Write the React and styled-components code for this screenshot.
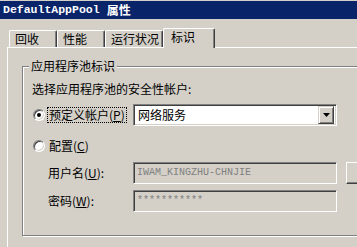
import React from 'react';
import styled, { createGlobalStyle } from 'styled-components';

const GlobalStyle = createGlobalStyle`
  html, body {
    margin: 0;
    padding: 0;
    background: #d4d0c8;
    overflow: hidden;
  }
`;

const tabs = [
  { label: '回收', width: 48 },
  { label: '性能', width: 48 },
  { label: '运行状况', width: 58 },
  { label: '标识', width: 52, active: true },
];

const Underline = ({ children }) => <Accel>{children}</Accel>;

const App = () => {
  return (
    <Window>
      <GlobalStyle />
      <TitleBar>
        <TitleLatin>DefaultAppPool</TitleLatin>
        <TitleCjk>属性</TitleCjk>
      </TitleBar>
      <Content>
        <TabStrip>
          {tabs.map(t => (
            <Tab key={t.label} $w={t.width} $active={t.active}>
              {t.label}
            </Tab>
          ))}
        </TabStrip>
        <Panel>
          <GroupBox>
            <Legend>应用程序池标识</Legend>
            <Instruction>选择应用程序池的安全性帐户:</Instruction>

            <Row $top={8}>
              <LabelCell>
                <Radio $checked />
                <FocusLabel>
                  预定义帐户(<Underline>P</Underline>)
                </FocusLabel>
              </LabelCell>
              <Combo>
                <ComboText>网络服务</ComboText>
                <DropButton>
                  <svg width="7" height="4" viewBox="0 0 7 4">
                    <path d="M0 0h7L3.5 4z" fill="#000" />
                  </svg>
                </DropButton>
              </Combo>
            </Row>

            <Row $top={9}>
              <LabelCell>
                <Radio />
                <PlainLabel>
                  配置(<Underline>C</Underline>)
                </PlainLabel>
              </LabelCell>
            </Row>

            <Row $top={5}>
              <FieldLabel>
                用户名(<Underline>U</Underline>):
              </FieldLabel>
              <DisabledField>IWAM_KINGZHU-CHNJIE</DisabledField>
              <PushButton />
            </Row>

            <Row $top={6}>
              <FieldLabel>
                密码(<Underline>W</Underline>):
              </FieldLabel>
              <DisabledField>***********</DisabledField>
            </Row>
          </GroupBox>
        </Panel>
      </Content>
    </Window>
  );
};

const Window = styled.div`
  width: 357px;
  height: 247px;
  overflow: hidden;
  display: flex;
  flex-direction: column;
  background: #d4d0c8;
  color: #000;
  font-family: "Noto Sans CJK SC", "Liberation Sans", sans-serif;
  font-size: 12px;
  line-height: 14px;
`;

const TitleBar = styled.div`
  flex-shrink: 0;
  height: 18px;
  margin-top: 1px;
  padding-left: 3px;
  display: flex;
  align-items: center;
  background: #0a246a;
  color: #ffffff;
  font-weight: bold;
  white-space: nowrap;
`;

const TitleLatin = styled.span`
  font-family: "Liberation Mono", monospace;
  font-size: 11.5px;
`;

const TitleCjk = styled.span`
  margin-left: 7px;
  font-size: 12px;
`;

const Content = styled.div`
  flex: 1;
  display: flex;
  flex-direction: column;
  padding: 8px 0 0 7px;
`;

const TabStrip = styled.div`
  display: flex;
  align-items: flex-end;
  height: 20px;
  padding-left: 2px;
  position: relative;
  z-index: 1;
`;

const Tab = styled.div`
  box-sizing: border-box;
  width: ${p => p.$w}px;
  height: ${p => (p.$active ? 20 : 17)}px;
  margin-bottom: ${p => (p.$active ? -1 : 0)}px;
  padding: 1px 0 0 ${p => (p.$active ? 7 : 5)}px;
  border-top: 1px solid #ffffff;
  border-left: 1px solid #ffffff;
  border-right: 1px solid #404040;
  border-radius: 2px 2px 0 0;
  box-shadow: inset -1px 0 0 #808080;
  background: #d4d0c8;
  white-space: nowrap;
  position: relative;
  z-index: ${p => (p.$active ? 2 : 1)};
`;

const Panel = styled.div`
  flex: 1;
  width: 400px;
  padding: 18px 0 0 14px;
  border-top: 1px solid #ffffff;
  border-left: 1px solid #ffffff;
`;

const GroupBox = styled.div`
  position: relative;
  box-sizing: border-box;
  width: 372px;
  height: 170px;
  padding: 15px 0 0 9px;
  border: 1px solid #808080;
  box-shadow: inset 1px 1px 0 #ffffff, 1px 1px 0 #ffffff;
  display: flex;
  flex-direction: column;
`;

const Legend = styled.div`
  position: absolute;
  top: -8px;
  left: 6px;
  padding: 0 2px;
  background: #d4d0c8;
`;

const Instruction = styled.div`
  height: 14px;
  white-space: nowrap;
`;

const Row = styled.div`
  display: flex;
  align-items: center;
  height: 22px;
  margin-top: ${p => p.$top}px;
`;

const LabelCell = styled.div`
  display: flex;
  align-items: center;
  width: 101px;
  padding-left: 1px;
  box-sizing: border-box;
  flex-shrink: 0;
`;

const Radio = styled.span`
  position: relative;
  box-sizing: border-box;
  width: 12px;
  height: 12px;
  flex-shrink: 0;
  border-radius: 50%;
  border: 1px solid;
  border-color: #808080 #ffffff #ffffff #808080;
  box-shadow: inset 1px 1px 0 #404040, inset -1px -1px 0 #d4d0c8;
  background: #ffffff;

  &::after {
    content: '';
    display: ${p => (p.$checked ? 'block' : 'none')};
    position: absolute;
    left: 3px;
    top: 3px;
    width: 4px;
    height: 4px;
    border-radius: 50%;
    background: #000000;
  }
`;

const FocusLabel = styled.span`
  margin-left: 2px;
  padding: 0 1px;
  border: 1px dotted #000000;
  white-space: nowrap;
`;

const PlainLabel = styled.span`
  margin-left: 4px;
  white-space: nowrap;
`;

const FieldLabel = styled.div`
  width: 101px;
  padding-left: 16px;
  box-sizing: border-box;
  flex-shrink: 0;
  white-space: nowrap;
`;

const Accel = styled.u`
  text-underline-offset: 1px;
`;

const Sunken = styled.div`
  box-sizing: border-box;
  width: 204px;
  height: 22px;
  flex-shrink: 0;
  border: 1px solid;
  border-color: #808080 #ffffff #ffffff #808080;
  box-shadow: inset 1px 1px 0 #404040, inset -1px -1px 0 #d4d0c8;
  display: flex;
  align-items: center;
`;

const Combo = styled(Sunken)`
  background: #ffffff;
  padding: 2px 2px 2px 4px;
  justify-content: space-between;
`;

const ComboText = styled.span`
  white-space: nowrap;
`;

const DropButton = styled.div`
  box-sizing: border-box;
  width: 16px;
  height: 18px;
  display: flex;
  align-items: center;
  justify-content: center;
  background: #d4d0c8;
  border: 1px solid;
  border-color: #d4d0c8 #404040 #404040 #d4d0c8;
  box-shadow: inset 1px 1px 0 #ffffff, inset -1px -1px 0 #808080;
`;

const DisabledField = styled(Sunken)`
  background: #d4d0c8;
  padding-left: 3px;
  color: #808080;
  font-family: "Liberation Mono", monospace;
  font-size: 10px;
  white-space: nowrap;
`;

const PushButton = styled.div`
  box-sizing: border-box;
  width: 80px;
  height: 22px;
  margin-left: 9px;
  flex-shrink: 0;
  background: #d4d0c8;
  border: 1px solid;
  border-color: #ffffff #404040 #404040 #ffffff;
  box-shadow: inset -1px -1px 0 #808080;
`;

export default App;
